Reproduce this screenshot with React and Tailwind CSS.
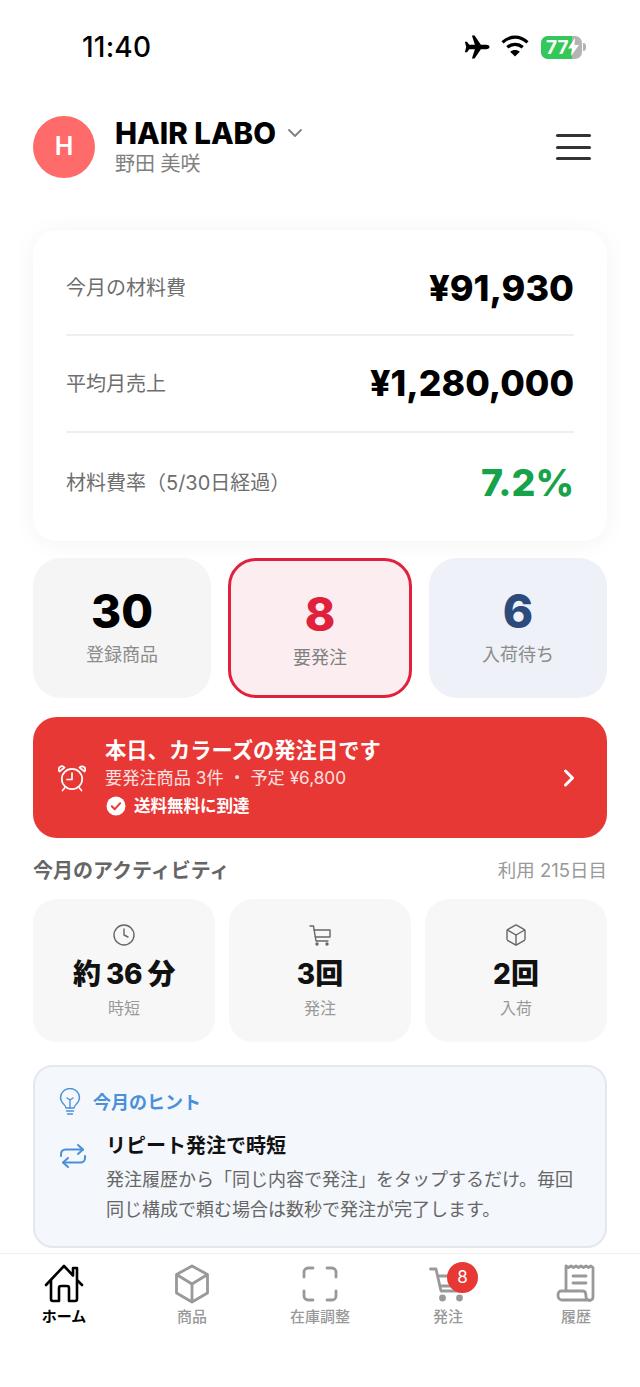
import React from 'react';
import { Clock, Box, ChevronRight, ChevronDown } from 'lucide-react';

const font = { fontFamily: '"Inter","Noto Sans CJK JP",sans-serif' };

function StatusBar() {
  return (
    <div className="h-[94px] flex items-center pl-[82px] pr-[54px] justify-between">
      <span className="text-[28px] font-medium text-black leading-none tracking-[0.2px]">11:40</span>
      <div className="flex items-center">
        <svg width="27" height="24" viewBox="0 0 27 24" className="mr-[11px] -ml-[1px]" fill="#000">
          <path d="M26.5 12c0-1.3-1.6-2.2-3.4-2.2h-5.2L11.6.6H8.9l3 9.2H6.3L4 6.8H1.900l1.3 5.2-1.3 5.2H4l2.3-3h5.6l-3 9.2h2.7l6.3-9.2h5.2c1.8 0 3.4-.9 3.4-2.2z" />
        </svg>
        <svg width="28" height="22" viewBox="0 0 28 22" className="mr-[12px] -mt-[2px]" fill="none" stroke="#000" strokeWidth="3.2">
          <path d="M1.5 7.4C9 .4 19 .4 26.5 7.4" />
          <path d="M6.3 12.3c4.4-4 11-4 15.4 0" />
          <path d="M14 21.500l-4.8-4.8c2.6-2.3 7-2.3 9.6 0z" fill="#000" stroke="none" />
        </svg>
        <div className="relative w-[41px] h-[23px] rounded-[7px] bg-[#b4b4b4] overflow-hidden flex items-center">
          <div className="absolute inset-y-0 left-0 w-[31px] bg-[#34c759]" />
          <span className="relative text-white font-bold text-[19px] leading-none pl-[5px]">77</span>
          <svg width="11" height="18" viewBox="0 0 11 18" className="relative" fill="#fff">
            <path d="M7 0L0 10.5h4L3 18l8-11H6.5z" />
          </svg>
        </div>
        <div className="w-[3px] h-[8px] rounded-r-full bg-[#b4b4b4] ml-px" />
      </div>
    </div>
  );
}

function Header() {
  return (
    <div className="mt-[22px] px-[33px] h-[62px] flex items-center">
      <div className="w-[62px] h-[62px] rounded-full bg-[#ff6b6b] flex items-center justify-center text-white text-[25px] font-semibold">H</div>
      <div className="ml-[20px] flex-1">
        <div className="flex items-center h-[33px]">
          <span className="text-[29.5px] font-extrabold text-black leading-none">HAIR LABO</span>
          <ChevronDown size={24} strokeWidth={1.8} className="ml-[7px] text-[#808080] -mt-[2px]" />
        </div>
        <div className="text-[20px] text-[#808080] leading-[26px] mt-[1px]">野田 美咲</div>
      </div>
      <div className="w-[35px] flex flex-col gap-[8.5px] mr-[16px]">
        <div className="h-[3px] rounded-full bg-[#333]" />
        <div className="h-[3px] rounded-full bg-[#333]" />
        <div className="h-[3px] rounded-full bg-[#333]" />
      </div>
    </div>
  );
}

function SummaryCard() {
  return (
    <div className="mt-[52px] mx-[33px] h-[311px] rounded-[24px] bg-white shadow-[0_2px_24px_rgba(0,0,0,0.05)] px-[33px] flex flex-col">
      <div className="h-[106px] flex items-center justify-between border-b-2 border-[#eeeeee] pt-[12px]">
        <span className="text-[20px] text-[#6e6e6e]">今月の材料費</span>
        <span className="text-[36px] font-extrabold text-black leading-none">¥91,930</span>
      </div>
      <div className="h-[97px] flex items-center justify-between border-b-2 border-[#eeeeee]">
        <span className="text-[20px] text-[#6e6e6e]">平均月売上</span>
        <span className="text-[35.600px] font-extrabold text-black leading-none">¥1,280,000</span>
      </div>
      <div className="flex-1 flex items-center justify-between pb-[9px]">
        <span className="text-[20px] text-[#6e6e6e]">材料費率（5/30日経過）</span>
        <span className="text-[37.500px] font-extrabold text-[#16a34a] leading-none">7.2%</span>
      </div>
    </div>
  );
}

function Stats() {
  return (
    <div className="mt-[17px] mx-[33px] h-[140px] flex gap-[17px]">
      <div className="flex-1 rounded-[28px] bg-[#f5f5f5] flex flex-col items-center pt-[28px]">
        <div className="text-[46px] font-extrabold text-black leading-[50px]">30</div>
        <div className="text-[18px] text-[#8c8c8c] leading-[26px] mt-[6px]">登録商品</div>
      </div>
      <div className="w-[184px] rounded-[28px] bg-[#fcedf0] border-[3px] border-[#e0213b] flex flex-col items-center pt-[28px]">
        <div className="text-[46px] font-extrabold text-[#e0213b] leading-[50px]">8</div>
        <div className="text-[18px] text-[#808080] leading-[26px] mt-[6px]">要発注</div>
      </div>
      <div className="flex-1 rounded-[28px] bg-[#eef1f8] flex flex-col items-center pt-[28px]">
        <div className="text-[46px] font-extrabold text-[#2c4a7c] leading-[50px]">6</div>
        <div className="text-[18px] text-[#8c8c8c] leading-[26px] mt-[6px]">入荷待ち</div>
      </div>
    </div>
  );
}

function Banner() {
  return (
    <div className="mt-[19px] mx-[33px] h-[121px] rounded-[24px] bg-[#e73835] flex items-center pl-[25px] pr-[24px] text-white">
      <svg width="28" height="28" viewBox="0 0 28 28" fill="none" stroke="#fff" strokeWidth="1.7" strokeLinecap="round" strokeLinejoin="round">
        <circle cx="14" cy="15" r="10.2" />
        <path d="M14 9v6.500H9" />
        <path d="M6.500 24l-2 2.500M21.500 24l2 2.500" />
        <path d="M1.500 7.500a3.200 3.200 0 0 1 5-4zM26.500 7.500a3.200 3.200 0 0 0-5-4z" />
      </svg>
      <div className="ml-[19px] flex-1">
        <div className="text-[21.300px] font-bold leading-[28px]">本日、カラーズの発注日です</div>
        <div className="text-[17.200px] leading-[28px] text-[#fde0e0] whitespace-pre">要発注商品 3件 ・ 予定 ¥6,800</div>
        <div className="flex items-center leading-[28px]">
          <svg width="20" height="20" viewBox="0 0 20 20" className="ml-[1px]">
            <circle cx="10" cy="10" r="9.5" fill="#fff" />
            <path d="M5.800 10.200l3 3 5.400-6" fill="none" stroke="#e73835" strokeWidth="2" strokeLinecap="round" strokeLinejoin="round" />
          </svg>
          <span className="ml-[8px] text-[16.500px] font-bold">送料無料に到達</span>
        </div>
      </div>
      <ChevronRight size={28} strokeWidth={2.6} />
    </div>
  );
}

function Activity({ icon, value, label, tight }) {
  return (
    <div className="flex-1 h-[143px] rounded-[24px] bg-[#f7f7f7] flex flex-col items-center pt-[24px]">
      <div className="h-[24px] text-[#666]">{icon}</div>
      <div className={`mt-[8px] text-[28px] font-extrabold text-[#111] leading-[38px] ${tight ? 'tracking-[-0.5px]' : ''}`}>{value}</div>
      <div className="mt-[3px] text-[16px] text-[#999] leading-[24px]">{label}</div>
    </div>
  );
}

function ActivitySection() {
  return (
    <>
      <div className="mt-[19px] mx-[33px] h-[28px] flex items-center justify-between">
        <span className="text-[20px] font-bold text-[#666]">今月のアクティビティ</span>
        <span className="text-[18.500px] text-[#999]">利用 215日目</span>
      </div>
      <div className="mt-[14px] mx-[33px] flex gap-[14px]">
        <Activity tight icon={<Clock size={24} strokeWidth={1.4} />} value="約 36 分" label="時短" />
        <Activity
          icon={
            <svg width="24" height="24" viewBox="0 0 24 24" fill="none" stroke="currentColor" strokeWidth="1.4" strokeLinecap="round" strokeLinejoin="round">
              <path d="M2 3h3.500L8 18h12" />
              <path d="M6 7h16v7H7.200" />
              <circle cx="9" cy="21" r="1" fill="currentColor" />
              <circle cx="19" cy="21" r="1" fill="currentColor" />
            </svg>
          }
          value="3回"
          label="発注"
        />
        <Activity icon={<Box size={24} strokeWidth={1.4} />} value="2回" label="入荷" />
      </div>
    </>
  );
}

function Hint() {
  return (
    <div className="mt-[23px] mx-[33px] h-[183px] rounded-[20px] bg-[#f4f7fc] border-2 border-[#e3e8f0] pl-[24px] pr-[20px] pt-[21px]">
      <div className="flex items-center">
        <svg width="22" height="28" viewBox="0 0 22 28" fill="none" stroke="#4a90d9" strokeWidth="1.4" strokeLinecap="round" strokeLinejoin="round">
          <path d="M7 20c0-3-5.500-5-5.500-10.500a9.500 9 0 0 1 19 0C20.500 15 15 17 15 20z" />
          <path d="M11 20v-8M8 10l3 2 3-2M7.500 23h7M8.500 26h5" />
        </svg>
        <span className="ml-[12px] text-[18px] font-semibold text-[#4a90d9]">今月のヒント</span>
      </div>
      <div className="flex mt-[15px]">
        <svg width="28" height="30" viewBox="0 0 28 30" className="mt-[10px] shrink-0" fill="none" stroke="#4a90d9" strokeWidth="2" strokeLinecap="round" strokeLinejoin="round">
          <path d="M19 4l5 4.500-5 4.500" />
          <path d="M2 15v-2a4.500 4.500 0 0 1 4.500-4.500H24" />
          <path d="M9 26l-5-4.500L9 17" />
          <path d="M26 15v2a4.500 4.500 0 0 1-4.500 4.500H4" />
        </svg>
        <div className="ml-[19px]">
          <div className="text-[20px] font-bold text-[#111] leading-[30px]">リピート発注で時短</div>
          <div className="mt-[4px] text-[18px] text-[#666] leading-[29.500px] whitespace-nowrap">発注履歴から「同じ内容で発注」をタップするだけ。毎回<br />同じ構成で頼む場合は数秒で発注が完了します。</div>
        </div>
      </div>
    </div>
  );
}

function NavItem({ label, active, children }) {
  return (
    <div className="w-[128px] flex flex-col items-center">
      <div className="relative h-[42px] w-[48px] flex items-center justify-center">{children}</div>
      <div className={`mt-[1px] text-[15px] leading-[22px] ${active ? 'font-bold text-black' : 'font-medium text-[#999]'}`}>{label}</div>
    </div>
  );
}

function Nav() {
  return (
    <div className="mt-[5px] border-t border-[#f0f0f0] pt-[9px] flex">
      <NavItem label="ホーム" active>
        <svg width="40" height="40" viewBox="0 0 40 40" fill="none" stroke="#000" strokeWidth="2.6" strokeLinecap="round" strokeLinejoin="round">
          <path d="M2 21L20 2l9 9.500V4h4v12l5 5" />
          <path d="M7 16.500V35a2 2 0 0 0 2 2h6V24a2 2 0 0 1 2-2h6a2 2 0 0 1 2 2v13h6a2 2 0 0 0 2-2V17" />
        </svg>
      </NavItem>
      <NavItem label="商品">
        <svg width="36" height="40" viewBox="0 0 36 40" fill="none" stroke="#999" strokeWidth="2.8" strokeLinejoin="round">
          <path d="M18 2L33.500 10.500V29L18 38 2.500 29V10.500z" />
          <path d="M2.500 10.500L18 20l15.500-9.500M18 20v18" />
        </svg>
      </NavItem>
      <NavItem label="在庫調整">
        <svg width="36" height="36" viewBox="0 0 36 36" fill="none" stroke="#999" strokeWidth="2.8" strokeLinecap="round">
          <path d="M2 11V6a4 4 0 0 1 4-4h5M25 2h5a4 4 0 0 1 4 4v5M34 25v5a4 4 0 0 1-4 4h-5M11 34H6a4 4 0 0 1-4-4v-5" />
        </svg>
      </NavItem>
      <NavItem label="発注">
        <svg width="38" height="38" viewBox="0 0 38 38" fill="none" stroke="#999" strokeWidth="2.8" strokeLinecap="round" strokeLinejoin="round">
          <path d="M1.500 4H7l5 22h22" />
          <path d="M9 11h27l-2.500 10H11" />
          <circle cx="13.500" cy="33" r="2" fill="#999" />
          <circle cx="30.500" cy="33" r="2" fill="#999" />
        </svg>
        <div className="absolute -top-[1px] left-[23px] w-[31px] h-[31px] rounded-full bg-[#e73835] flex items-center justify-center text-white text-[17px] leading-none">8</div>
      </NavItem>
      <NavItem label="履歴">
        <svg width="40" height="40" viewBox="0 0 40 40" fill="none" stroke="#999" strokeWidth="2.8" strokeLinecap="round" strokeLinejoin="round">
          <path d="M10 27V2l2.500 1.500L15 2l2.500 1.500L20 2l2.500 1.500L25 2l2.500 1.500L30 2l2.500 1.500L35 2l2 1.500V33a3.500 3.500 0 0 1-7 0c0-3-1-6-3-6H5c-2 0-3 2-3 4.500S3.500 36 6 36h27" />
          <path d="M17 12h13M17 19h13" />
        </svg>
      </NavItem>
    </div>
  );
}

export default function App() {
  return (
    <div style={font} className="w-[640px] h-[1387px] bg-white overflow-hidden flex flex-col">
      <StatusBar />
      <Header />
      <SummaryCard />
      <Stats />
      <Banner />
      <ActivitySection />
      <Hint />
      <Nav />
    </div>
  );
}
